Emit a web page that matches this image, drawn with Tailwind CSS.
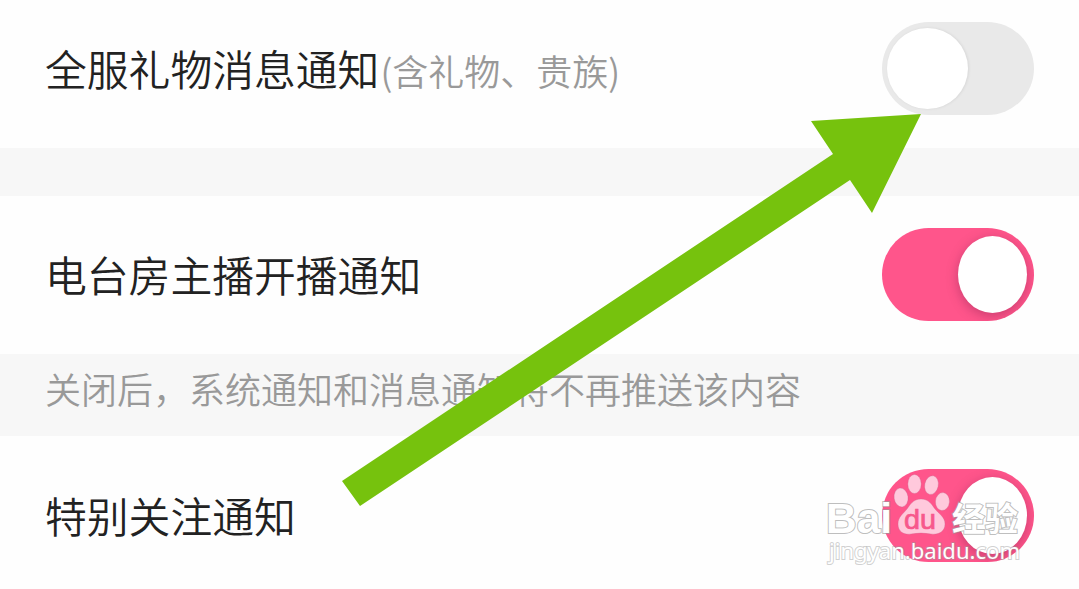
<!DOCTYPE html>
<html lang="zh-CN">
  <head>
    <meta charset="UTF-8" />
    <meta name="viewport" content="width=device-width, initial-scale=1.0" />
    <title>通知设置</title>
    <script src="https://cdn.jsdelivr.net/npm/@tailwindcss/browser@4"></script>
  </head>

  <body class="relative h-[589px] overflow-hidden bg-[#fefefe] font-['Noto_Sans_CJK_SC',sans-serif] text-[41.8px] text-[#222]">
    <!-- Settings list -->
    <main class="flex flex-col">
      <section class="flex h-[148px] items-start justify-between pl-[45px] pr-[45px] pt-[22px]">
        <h2 class="flex items-baseline whitespace-nowrap font-[350] leading-[93px]">
          全服礼物消息通知<span class="ml-px text-[36px] leading-[90px] text-[#999]">(含礼物、贵族)</span>
        </h2>
        <button class="h-[93px] w-[152px] rounded-full bg-[#e9e9e9] pl-[5px]">
          <span class="block size-[81px] rounded-full bg-white shadow-[1px_0_3px_rgba(0,0,0,0.08)]"></span>
        </button>
      </section>

      <div class="h-12 bg-[#f7f7f7]"></div>

      <section class="flex h-[158px] items-start justify-between pl-[45px] pr-[45px] pt-8">
        <h2 class="whitespace-nowrap font-[350] leading-[93px]">电台房主播开播通知</h2>
        <button class="flex h-[93px] w-[152px] items-center justify-end overflow-hidden rounded-full bg-[#ff558b] pr-[7px]">
          <span class="block h-[77px] w-[69px] rounded-[50%] bg-white shadow-[0_3px_12px_rgba(100,20,60,0.35)]"></span>
        </button>
      </section>

      <p class="h-[82px] whitespace-nowrap bg-[#f7f7f7] pl-[45px] text-[36px] font-[350] leading-[68px] text-[#999]">关闭后，系统通知和消息通知将不再推送该内容</p>

      <section class="flex h-[153px] items-start justify-between pl-[45px] pr-[45px] pt-[33px]">
        <h2 class="whitespace-nowrap font-[350] leading-[93px]">特别关注通知</h2>
        <button class="flex h-[93px] w-[152px] items-center justify-end overflow-hidden rounded-full bg-[#ff558b] pr-[7px]">
          <span class="block h-[77px] w-[69px] rounded-[50%] bg-white shadow-[0_3px_12px_rgba(100,20,60,0.35)]"></span>
        </button>
      </section>
    </main>

    <!-- Arrow and watermark -->
    <svg class="pointer-events-none absolute left-0 top-0" width="1079" height="589" viewBox="0 0 1079 589">
      <polygon points="342,481 833,154 811,121 921,114 872,213 850,180 360,506" fill="#76c20d" />

      <g fill="#fff" stroke="#999" stroke-opacity=".65" stroke-width="2" paint-order="stroke">
        <text x="826" y="533" textLength="66" lengthAdjust="spacingAndGlyphs" class="font-['Liberation_Sans'] text-[43px] font-bold">Bai</text>
        <text x="952" y="531" textLength="66" lengthAdjust="spacingAndGlyphs" class="font-['Noto_Sans_CJK_SC'] text-[33px] font-bold">经验</text>
        <text x="829" y="559" textLength="191" lengthAdjust="spacingAndGlyphs" stroke-opacity=".45" class="font-['Noto_Sans'] text-[22px]">jingyan.baidu.com</text>
      </g>
      <g fill="#ffc9dc" stroke="#c8638a" stroke-opacity=".4" stroke-width=".8">
        <ellipse cx="901" cy="497.500" rx="7" ry="9.500" transform="rotate(-8 901 497)" />
        <ellipse cx="914.500" cy="484" rx="6.700" ry="9.500" />
        <ellipse cx="931.500" cy="485" rx="6.800" ry="9.500" transform="rotate(12 931 485)" />
        <ellipse cx="942.500" cy="501.500" rx="7" ry="9" transform="rotate(5 942 501)" />
        <path d="M921 499C913 499 910 505 907 509C903 514 898 517 898 524C898 532 904 535 911 534Q921 532 931 534C938 535 945 532 945 524C945 517 939 514 935 509C932 505 929 499 921 499Z" />
      </g>
      <text x="904" y="529" textLength="32" lengthAdjust="spacingAndGlyphs" fill="#f7588c" stroke="#f7588c" stroke-width=".7" class="font-['Liberation_Sans'] text-[27px]">du</text>
    </svg>
  </body>
</html>
